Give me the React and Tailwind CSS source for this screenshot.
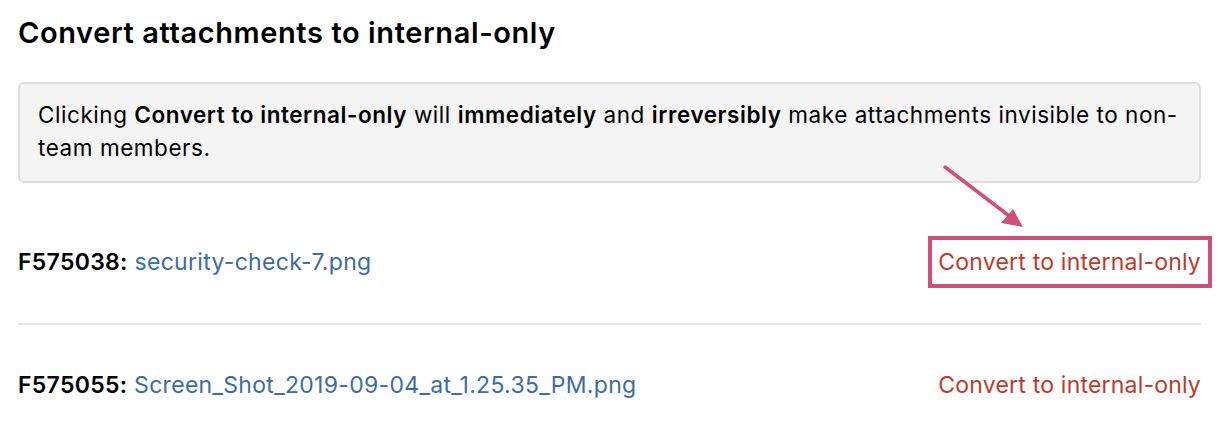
export default function App() {
  const rows = [
    { id: "F575038", name: "security-check-7.png", highlight: true },
    { id: "F575055", name: "Screen_Shot_2019-09-04_at_1.25.35_PM.png", highlight: false },
  ];
  return (
    <div className="relative w-[1218px] h-[434px] bg-white overflow-hidden text-black" style={{ fontFamily: "Inter, 'Noto Sans', sans-serif" }}>
      <div className="pl-[18px] pr-[17px]">
        <h1 className="pt-[14px] text-[29px] font-semibold leading-[38px] tracking-[0.6px]">Convert attachments to internal-only</h1>
        <div className="mt-[30px] h-[101px] rounded-[6px] border-2 border-[#dedede] bg-[#f4f4f4] px-[18px] pt-[14px] text-[22.5px] leading-[33px] tracking-[0.55px]">
          Clicking <b className="font-semibold">Convert to internal-only</b> will <b className="font-semibold">immediately</b> and{" "}
          <b className="font-semibold">irreversibly</b> make attachments invisible to non-team members.
        </div>
        <div className="mt-[48px] text-[23px] leading-[28px] tracking-[0.3px]">
          <div className="flex items-center justify-between h-[62px]">
            <div>
              <span className="font-semibold">{rows[0].id}:</span>{" "}
              <span className="text-[#3a6da5]">{rows[0].name}</span>
            </div>
            <div className="relative">
              <span className="text-[#c0392b] tracking-[0.2px]">Convert to internal-only</span>
              <div className="absolute -left-[10px] -right-[11px] -top-[12px] -bottom-[12px] border-4 border-[#d54d7b]" />
            </div>
          </div>
          <div className="mt-[30px] border-t-2 border-[#e6e6e6]" />
          <div className="mt-[29px] flex items-center justify-between h-[62px]">
            <div>
              <span className="font-semibold">{rows[1].id}:</span>{" "}
              <span className="text-[#3a6da5]">{rows[1].name}</span>
            </div>
            <span className="text-[#c0392b] tracking-[0.2px]">Convert to internal-only</span>
          </div>
        </div>
      </div>
      <svg className="absolute left-0 top-0" width="1218" height="434" viewBox="0 0 1218 434">
        <line x1="945" y1="167" x2="1008" y2="215" stroke="#d54d7b" strokeWidth="3.5" strokeLinecap="round" />
        <polygon points="1023,227 1001,223 1013,209" fill="#d54d7b" />
      </svg>
    </div>
  );
}
